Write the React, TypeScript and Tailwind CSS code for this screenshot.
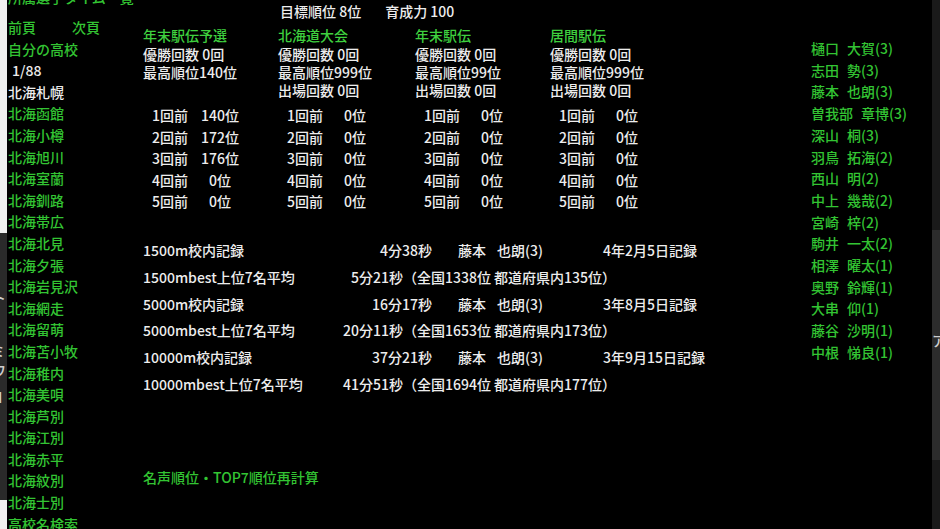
import React from 'react';

const font = "font-['Noto_Sans_CJK_JP',sans-serif]";

const schools = [
  '北海函館', '北海小樽', '北海旭川', '北海室蘭', '北海釧路', '北海帯広', '北海北見',
  '北海夕張', '北海岩見沢', '北海網走', '北海留萌', '北海苫小牧', '北海稚内', '北海美唄',
  '北海芦別', '北海江別', '北海赤平', '北海紋別', '北海士別', '高校名検索',
];

const races = [
  { title: '年末駅伝予選', best: '最高順位140位', appear: null, ranks: ['140位', '172位', '176位', '0位', '0位'], w: 'w-[135px]' },
  { title: '北海道大会', best: '最高順位999位', appear: '出場回数 0回', ranks: ['0位', '0位', '0位', '0位', '0位'], w: 'w-[137px]' },
  { title: '年末駅伝', best: '最高順位99位', appear: '出場回数 0回', ranks: ['0位', '0位', '0位', '0位', '0位'], w: 'w-[135px]' },
  { title: '居間駅伝', best: '最高順位999位', appear: '出場回数 0回', ranks: ['0位', '0位', '0位', '0位', '0位'], w: 'w-[135px]' },
];

type Rec =
  | { kind: 'school'; label: string; time: string; name: string; date: string }
  | { kind: 'avg'; label: string; time: string; rank: string };

const records: Rec[] = [
  { kind: 'school', label: '1500m校内記録', time: '4分38秒', name: '藤本', date: '4年2月5日記録' },
  { kind: 'avg', label: '1500mbest上位7名平均', time: '5分21秒', rank: '（全国1338位 都道府県内135位）' },
  { kind: 'school', label: '5000m校内記録', time: '16分17秒', name: '藤本', date: '3年8月5日記録' },
  { kind: 'avg', label: '5000mbest上位7名平均', time: '20分11秒', rank: '（全国1653位 都道府県内173位）' },
  { kind: 'school', label: '10000m校内記録', time: '37分21秒', name: '藤本', date: '3年9月15日記録' },
  { kind: 'avg', label: '10000mbest上位7名平均', time: '41分51秒', rank: '（全国1694位 都道府県内177位）' },
];

const players = [
  ['樋口', '大賀(3)'], ['志田', '勢(3)'], ['藤本', '也朗(3)'], ['曽我部', '章博(3)'], ['深山', '桐(3)'],
  ['羽鳥', '拓海(2)'], ['西山', '明(2)'], ['中上', '幾哉(2)'], ['宮崎', '梓(2)'], ['駒井', '一太(2)'],
  ['相澤', '曜太(1)'], ['奥野', '鈴輝(1)'], ['大串', '仰(1)'], ['藤谷', '沙明(1)'], ['中根', '悌良(1)'],
];

export default function App() {
  return (
    <div className={`flex h-[529px] w-[940px] overflow-hidden bg-black text-[14px] font-medium text-[#ededed] ${font}`}>
      {/* left window edge */}
      <div className="flex w-[7px] shrink-0 flex-col">
        <div className="h-[233px] bg-[#f0f0f0]" />
        <div className="flex flex-1 flex-col overflow-hidden bg-[#2a2a2a] pt-[54px] text-[#d0d0d0] leading-[20px]">
          <span className="-ml-[8px]">ト</span>
          <span className="-ml-[9px] mt-[33px]">ミ</span>
          <span className="-ml-[8px]">ワ</span>
          <span className="-ml-[8px] mt-[7px]">H</span>
        </div>
        <div className="h-[29px] bg-[#f0f0f0]" />
      </div>

      {/* school list */}
      <div className="w-[136px] shrink-0 pl-[1px] leading-[21.6px] text-[#33c433]">
        <div className="flex h-[17px] flex-col">
          <div className="-mt-[10px] whitespace-nowrap leading-[14px]">所属選手タイム一覧</div>
        </div>
        <div className="flex">
          <span className="w-[64px]">前頁</span>
          <span>次頁</span>
        </div>
        <div>自分の高校</div>
        <div className="pl-[4px] text-[#ededed]">1/88</div>
        <div className="text-[#ededed]">北海札幌</div>
        {schools.map((s) => (
          <div key={s}>{s}</div>
        ))}
      </div>

      {/* main */}
      <div className="flex-1">
        <div className="h-[22px] whitespace-nowrap pl-[137px] leading-[22px]">
          目標順位 8位<span className="ml-[24px]">育成力 100</span>
        </div>

        <div className="mt-[3px] flex">
          {races.map((r) => (
            <div key={r.title} className={`${r.w} shrink-0 whitespace-nowrap`}>
              <div className="leading-[20px] text-[#3fd03f]">{r.title}</div>
              <div className="leading-[18px]">優勝回数 0回</div>
              <div className="leading-[18px]">{r.best}</div>
              <div className="h-[18px] leading-[18px]">{r.appear}</div>
              <div className="mt-[6px] leading-[21.6px]">
                {r.ranks.map((v, i) => (
                  <div key={i} className="flex pl-[9px]">
                    <span className="w-[48px]">{i + 1}回前</span>
                    <span className="w-[40px] text-center">{v}</span>
                  </div>
                ))}
              </div>
            </div>
          ))}
        </div>

        <div className="mt-[24px] whitespace-nowrap leading-[26.8px]">
          {records.map((r) =>
            r.kind === 'school' ? (
              <div key={r.label} className="flex">
                <span className="w-[180px]">{r.label}</span>
                <span className="w-[109px] text-right">{r.time}</span>
                <span className="ml-[26px] w-[145px]">
                  {r.name}
                  <span className="ml-[11px]">也朗(3)</span>
                </span>
                <span>{r.date}</span>
              </div>
            ) : (
              <div key={r.label} className="flex">
                <span className="w-[180px]">{r.label}</span>
                <span className="w-[80px] text-right">{r.time}</span>
                <span>{r.rank}</span>
              </div>
            ),
          )}
        </div>

        <div className="mt-[68px] leading-[22px] text-[#33c433]">名声順位・TOP7順位再計算</div>
      </div>

      {/* player list */}
      <div className="w-[121px] shrink-0 whitespace-nowrap pt-[38px] leading-[21.7px] text-[#33c433]">
        {players.map(([f, g]) => (
          <div key={f + g}>
            {f}
            <span className="ml-[8px]">{g}</span>
          </div>
        ))}
      </div>

      {/* right window edge */}
      <div className="flex w-[8px] shrink-0 flex-col bg-[#1a1a1a]">
        <div className="h-[230px]" />
        <div className="flex h-[230px] flex-col overflow-hidden bg-[#2c2c2c] pt-[100px] text-[#cfcfcf] leading-[20px]">
          <span>ア</span>
        </div>
      </div>
    </div>
  );
}
